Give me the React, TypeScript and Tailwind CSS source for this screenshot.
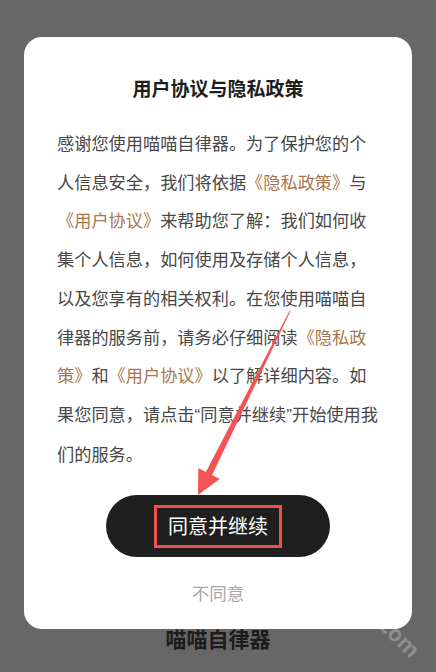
import React from 'react';

const font = "font-['Noto_Sans_CJK_SC','Noto_Sans',sans-serif]";

function Link({ children }: { children: React.ReactNode }) {
    return <span className="text-[#a8764c]">{children}</span>;
}

export default function App() {
    return (
        <div className={`relative w-[436px] h-[672px] overflow-hidden bg-[#676767] flex flex-col items-center pt-[37px] ${font}`}>
            <div className="w-[388px] bg-white rounded-[18px] px-[33px] pt-[37px] pb-[24px] flex flex-col items-center">
                <h1 className="text-[19px] leading-[28px] font-bold text-[#1e1e1e]">用户协议与隐私政策</h1>

                <p className="mt-[22px] w-[322px] text-[17.2px] leading-[38.7px] text-[#474747]">
                    感谢您使用喵喵自律器。为了保护您的个人信息安全，我们将依据<Link>《隐私政策》</Link>与<Link>《用户协议》</Link>来帮助您了解：我们如何收集个人信息，如何使用及存储个人信息，以及您享有的相关权利。在您使用喵喵自律器的服务前，请务必仔细阅读<Link>《隐私政策》</Link>和<Link>《用户协议》</Link>以了解详细内容。如<span className="whitespace-nowrap">果您同意，请点击<span className="font-['Liberation_Sans',sans-serif]">“</span>同意并继续<span className="font-['Liberation_Sans',sans-serif]">”</span>开始使用我</span>们的服务。
                </p>

                <button className="mt-[22px] w-[224px] h-[62px] rounded-full bg-[#1f1f1f] flex items-center justify-center">
                    <span className="border-[3px] border-[#f04f4f] px-[11px] h-[43px] flex items-center text-[20px] text-white">
                        同意并继续
                    </span>
                </button>

                <button className="mt-[24px] text-[17.5px] leading-[24px] text-[#a8a8a8]">不同意</button>
            </div>

            <div className="-mt-[3px] text-[21px] leading-[24px] font-bold text-[#1c1c1c]">喵喵自律器</div>

            <div className="absolute left-[378px] top-[620px] rotate-45 text-[22px] font-bold text-white/25 pointer-events-none">
                com
            </div>

            <svg className="absolute inset-0 pointer-events-none" width="436" height="672" viewBox="0 0 436 672">
                <polygon
                    points="289.6,310.8 290.4,311.2 212.1,475.1 219.7,478.9 198,495 198.3,468.1 205.9,471.9"
                    fill="#f25454"
                />
            </svg>
        </div>
    );
}
